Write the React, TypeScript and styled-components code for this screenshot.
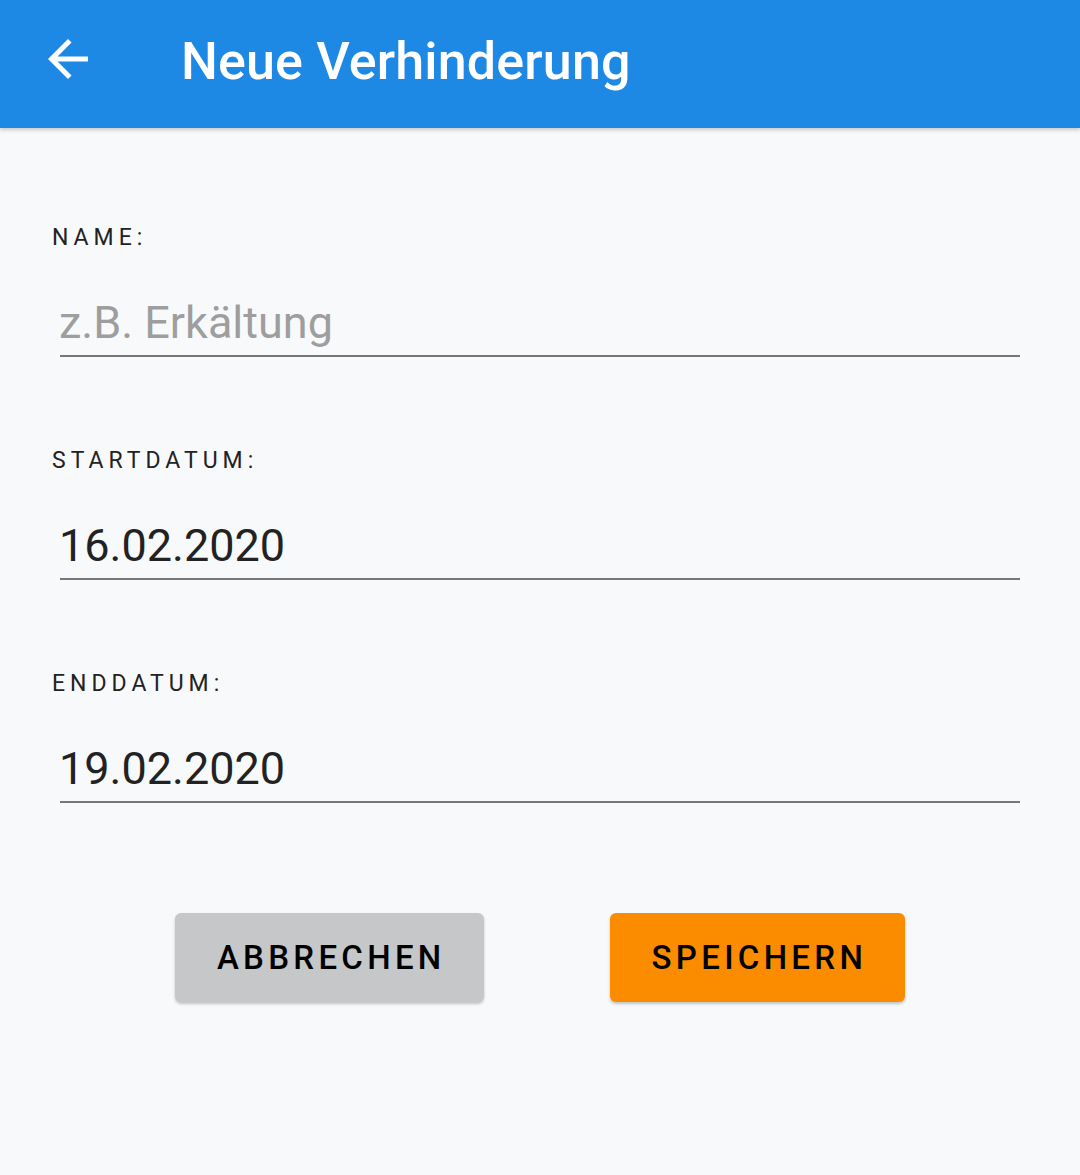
import React from "react";
import styled, { createGlobalStyle } from "styled-components";

const Global = createGlobalStyle`
  html, body { margin: 0; padding: 0; background: #f8f9fb; }
  body { font-family: Roboto, "Noto Sans", sans-serif; }
`;

const Page = styled.div`
  width: 1080px;
  height: 1175px;
  background: #f8f9fb;
  display: flex;
  flex-direction: column;
`;

const AppBar = styled.header`
  height: 128px;
  background: #1e88e5;
  display: flex;
  align-items: center;
  box-shadow: 0 2px 4px rgba(0, 0, 0, 0.2);
  flex-shrink: 0;
`;

const BackButton = styled.button`
  width: 60px;
  height: 60px;
  margin-left: 38px;
  margin-right: 83px;
  margin-top: -11px;
  background: none;
  border: none;
  padding: 0;
  display: flex;
  align-items: center;
  justify-content: center;
  color: #fff;
`;

const Title = styled.h1`
  margin: 0;
  color: #fff;
  font-family: Roboto, sans-serif;
  font-weight: 500;
  font-size: 52px;
  letter-spacing: 0.15px;
  margin-top: -6px;
`;

const Form = styled.main`
  display: flex;
  flex-direction: column;
  padding: 96px 60px 0 52px;
  gap: 90px;
`;

const Field = styled.div`
  display: flex;
  flex-direction: column;
`;

const Label = styled.label`
  font-family: Roboto, sans-serif;
  font-size: 23px;
  letter-spacing: 5px;
  color: #222;
  line-height: 28px;
  margin-bottom: 41px;
`;

const Input = styled.div<{ $placeholder?: boolean }>`
  margin-left: 8px;
  font-family: Roboto, sans-serif;
  font-size: 45px;
  line-height: 60px;
  color: ${(p) => (p.$placeholder ? "#9e9e9e" : "#222")};
  border-bottom: 2px solid #777;
  padding-bottom: 2px;
  text-indent: -1px;
`;

const Actions = styled.div`
  display: flex;
  justify-content: center;
  gap: 126px;
  margin-top: 20px;
  padding-left: 8px;
`;

const Button = styled.button<{ $primary?: boolean }>`
  height: 89px;
  padding: 0 38px 0 42px;
  border: none;
  border-radius: 6px;
  background: ${(p) => (p.$primary ? "#fb8c00" : "#c6c7c9")};
  color: #000;
  font-family: Roboto, sans-serif;
  font-weight: 500;
  font-size: 33px;
  letter-spacing: 4.3px;
  box-shadow: 0 2px 3px rgba(0, 0, 0, 0.22);
`;

export default function App() {
  return (
    <Page>
      <Global />
      <AppBar>
        <BackButton aria-label="Zurück">
          <svg width="60" height="60" viewBox="0 0 24 24" fill="none">
            <path d="M20 11H7.83l5.59-5.59L12 4l-8 8 8 8 1.41-1.41L7.83 13H20v-2z" fill="#fff" />
          </svg>
        </BackButton>
        <Title>Neue Verhinderung</Title>
      </AppBar>
      <Form>
        <Field>
          <Label>NAME:</Label>
          <Input $placeholder>z.B. Erkältung</Input>
        </Field>
        <Field>
          <Label>STARTDATUM:</Label>
          <Input>16.02.2020</Input>
        </Field>
        <Field>
          <Label>ENDDATUM:</Label>
          <Input>19.02.2020</Input>
        </Field>
        <Actions>
          <Button>ABBRECHEN</Button>
          <Button $primary>SPEICHERN</Button>
        </Actions>
      </Form>
    </Page>
  );
}
